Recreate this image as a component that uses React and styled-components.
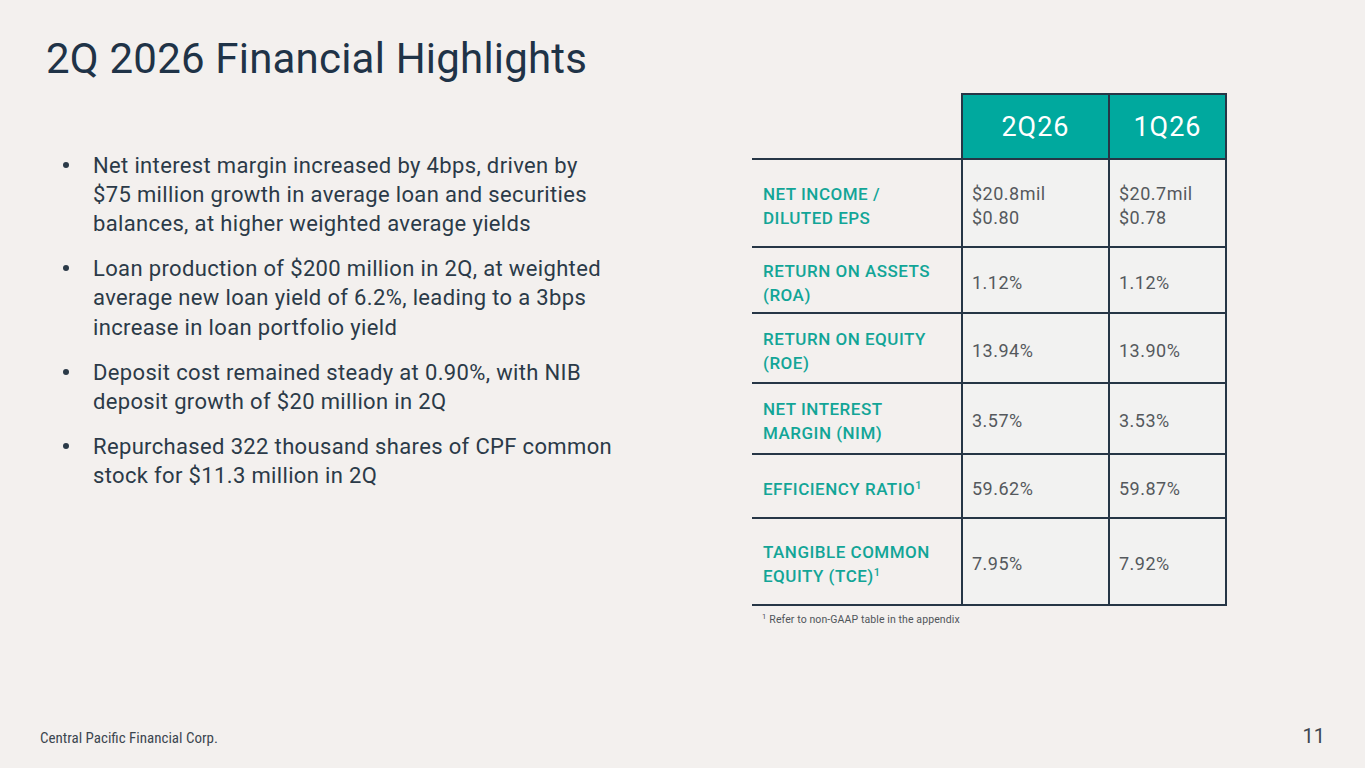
import React from 'react';
import styled, { createGlobalStyle } from 'styled-components';

const Global = createGlobalStyle`
  html, body { margin: 0; padding: 0; }
  body {
    background: #f3f0ee;
    font-family: Roboto, "Liberation Sans", sans-serif;
  }
`;

const Slide = styled.div`
  width: 1365px;
  height: 768px;
  box-sizing: border-box;
  padding: 35px 40px 0 46px;
  display: flex;
  flex-direction: column;
  overflow: hidden;
`;

const Title = styled.h1`
  margin: 0;
  font-size: 42px;
  font-weight: 400;
  line-height: 48px;
  color: #1f3347;
  letter-spacing: 0.2px;
`;

const Body = styled.div`
  display: flex;
  justify-content: space-between;
  margin-top: 10px;
  height: 560px;
`;

const Bullets = styled.ul`
  list-style: none;
  margin: 57.5px 0 0 17px;
  padding: 0;
  width: 580px;
`;

const Bullet = styled.li`
  position: relative;
  padding-left: 30px;
  font-size: 22px;
  line-height: 29.3px;
  letter-spacing: 0.35px;
  color: #2b3a48;
  margin-bottom: 15.7px;
  white-space: nowrap;
  &::before {
    content: '';
    position: absolute;
    left: 0;
    top: 11.2px;
    width: 6px;
    height: 6px;
    border-radius: 50%;
    background: #2b3a48;
  }
`;

const TableWrap = styled.div`
  width: 475px;
  margin-right: 98px;
`;

const Table = styled.div`
  display: grid;
  grid-template-columns: 209px 147px 119px;
  grid-template-rows: 67px 88px 66px 70px 71px 64px 87px;
`;

const Cell = styled.div`
  display: flex;
  align-items: center;
  box-sizing: border-box;
  padding-top: 5px;
  border-bottom: 2px solid #263646;
  border-left: ${p => (p.$label ? 'none' : '2px solid #263646')};
  border-right: ${p => (p.$last ? '2px solid #263646' : 'none')};
  background: ${p => (p.$label ? 'transparent' : '#f2f2f1')};
  padding-left: ${p => (p.$label ? '11px' : '9px')};
`;

const Blank = styled.div`
  border-bottom: 2px solid #263646;
`;

const Head = styled.div`
  display: flex;
  align-items: center;
  justify-content: center;
  box-sizing: border-box;
  background: #00a99e;
  color: #ffffff;
  font-size: 27px;
  letter-spacing: 1px;
  border-top: 2px solid #263646;
  border-bottom: 2px solid #263646;
  border-left: 2px solid #263646;
  border-right: ${p => (p.$last ? '2px solid #263646' : 'none')};
`;

const Label = styled.span`
  color: #12a597;
  font-size: 17px;
  font-weight: 500;
  line-height: 24px;
  text-transform: uppercase;
  letter-spacing: 0.5px;
  white-space: nowrap;
`;

const Value = styled.span`
  color: #55595d;
  font-size: 18px;
  line-height: 24px;
  letter-spacing: 0.5px;
`;

const Sup = styled.sup`
  font-size: 11px;
  vertical-align: 6px;
  line-height: 0;
  letter-spacing: 0;
`;

const NoteMark = styled.span`
  font-size: 7.5px;
  vertical-align: 4px;
  margin-right: 3px;
`;

const Note = styled.div`
  margin: 6px 0 0 10px;
  font-size: 10.5px;
  letter-spacing: 0.1px;
  color: #50555a;
`;

const Footer = styled.div`
  margin-top: auto;
  display: flex;
  justify-content: space-between;
  align-items: baseline;
  padding: 0 0 20px 0;
  margin-left: -6px;
`;

const Corp = styled.span`
  font-family: "Liberation Sans Narrow", "Roboto Condensed", "Liberation Sans", sans-serif;
  font-size: 15px;
  color: #3c4650;
`;

const PageNo = styled.span`
  font-size: 20px;
  color: #3c4650;
`;

const bullets = [
  ['Net interest margin increased by 4bps, driven by', '$75 million growth in average loan and securities', 'balances, at higher weighted average yields'],
  ['Loan production of $200 million in 2Q, at weighted', 'average new loan yield of 6.2%, leading to a 3bps', 'increase in loan portfolio yield'],
  ['Deposit cost remained steady at 0.90%, with NIB', 'deposit growth of $20 million in 2Q'],
  ['Repurchased 322 thousand shares of CPF common', 'stock for $11.3 million in 2Q'],
];

const rows = [
  { label: <>Net income /<br />diluted EPS</>, a: <>$20.8mil<br />$0.80</>, b: <>$20.7mil<br />$0.78</> },
  { label: <>Return on assets<br />(ROA)</>, a: '1.12%', b: '1.12%' },
  { label: <>Return on equity<br />(ROE)</>, a: '13.94%', b: '13.90%' },
  { label: <>Net interest<br />margin (NIM)</>, a: '3.57%', b: '3.53%' },
  { label: <>Efficiency ratio<Sup>1</Sup></>, a: '59.62%', b: '59.87%' },
  { label: <>Tangible common<br />equity (TCE)<Sup>1</Sup></>, a: '7.95%', b: '7.92%' },
];

export default function App() {
  return (
    <>
      <Global />
      <Slide>
        <Title>2Q 2026 Financial Highlights</Title>
        <Body>
          <Bullets>
            {bullets.map((lines, i) => (
              <Bullet key={i}>
                {lines.map((l, j) => (
                  <React.Fragment key={j}>
                    {j > 0 && <br />}
                    {l}
                  </React.Fragment>
                ))}
              </Bullet>
            ))}
          </Bullets>
          <TableWrap>
            <Table>
              <Blank />
              <Head>2Q26</Head>
              <Head $last>1Q26</Head>
              {rows.map((r, i) => (
                <React.Fragment key={i}>
                  <Cell $label><Label>{r.label}</Label></Cell>
                  <Cell><Value>{r.a}</Value></Cell>
                  <Cell $last><Value>{r.b}</Value></Cell>
                </React.Fragment>
              ))}
            </Table>
            <Note><NoteMark>1</NoteMark>Refer to non-GAAP table in the appendix</Note>
          </TableWrap>
        </Body>
        <Footer>
          <Corp>Central Pacific Financial Corp.</Corp>
          <PageNo>11</PageNo>
        </Footer>
      </Slide>
    </>
  );
}
